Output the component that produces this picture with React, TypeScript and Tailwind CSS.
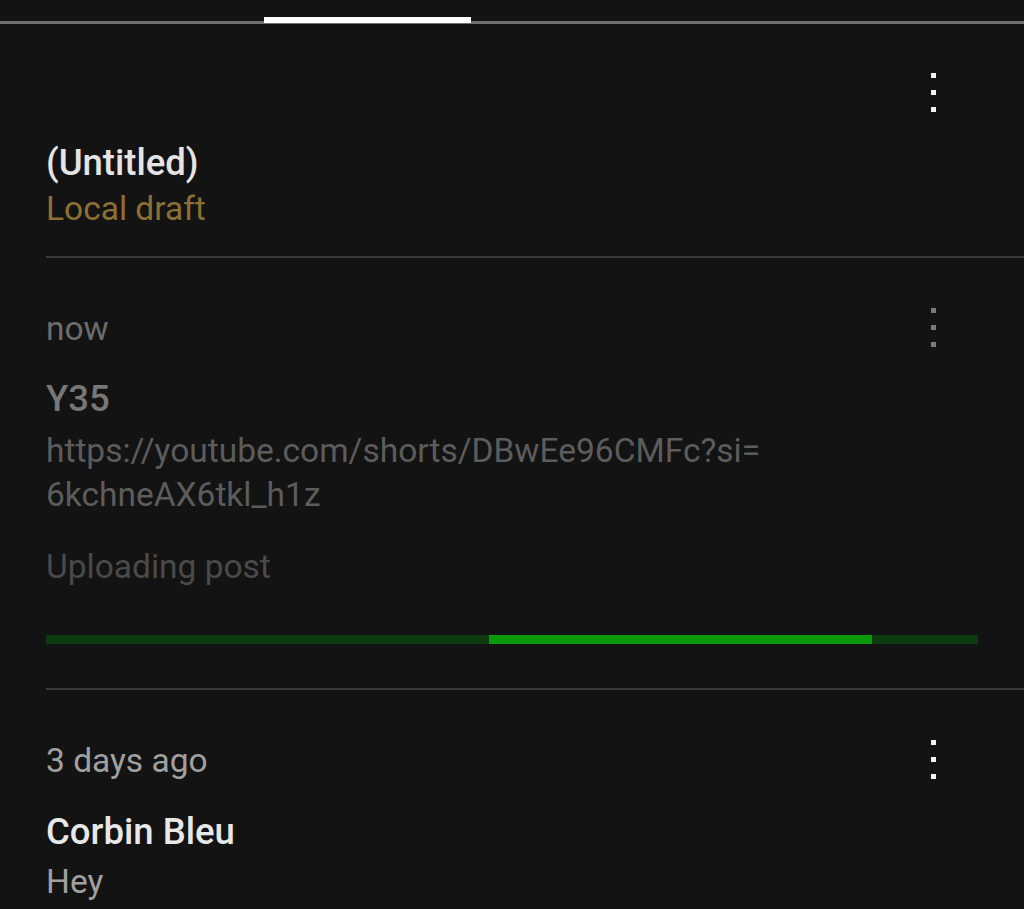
const font = { fontFamily: "Roboto, 'Noto Sans', sans-serif" };

// three square dots, like the android overflow menu
const Dots: React.FC<{ dim?: boolean }> = ({ dim }) => {
  const dot = dim ? "w-[5px] h-[5px] bg-[#7a7a7a]" : "w-[5px] h-[5px] bg-[#f2f2f2]";
  return (
    <button className="flex flex-col gap-[12px] mt-[1px] mr-[88px]" aria-label="More">
      <span className={dot} />
      <span className={dot} />
      <span className={dot} />
    </button>
  );
};

const Divider = () => <div className="ml-[46px] h-[2px] bg-[#383838]" />;

export default function App() {
  return (
    <div className="w-[1024px] h-[909px] overflow-hidden bg-[#131313]" style={font}>
      {/* Tabs */}
      <div className="relative h-[24px] border-b-[3px] border-[#6e6e6e]">
        <div className="absolute left-[264px] top-[17px] w-[207px] h-[6px] bg-white" />
      </div>

      {/* Local draft */}
      <section className="pl-[46px]">
        <div className="flex justify-end pt-[48px]">
          <Dots />
        </div>
        <h2 className="mt-[29px] text-[36.5px] leading-[44px] font-medium text-[#e4e4e4]">(Untitled)</h2>
        <p className="mt-[2px] text-[33.5px] leading-[44px] text-[#8c7033]">Local draft</p>
      </section>
      <div className="mt-[25px]">
        <Divider />
      </div>

      {/* Uploading */}
      <section className="pl-[46px] pt-[49px]">
        <div className="flex justify-between items-start">
          <span className="text-[33.5px] leading-[44px] text-[#6c6c6c]">now</span>
          <Dots dim />
        </div>
        <h2 className="mt-[26px] text-[36.5px] leading-[44px] font-medium text-[#777777]">Y35</h2>
        <p className="mt-[8px] text-[33.5px] leading-[44px] text-[#5c5c5c]">
          https://youtube.com/shorts/DBwEe96CMFc?si=
          <br />
          6kchneAX6tkl_h1z
        </p>
        <p className="mt-[28px] text-[33.5px] leading-[44px] text-[#4a4a4a]">Uploading post</p>
        <div className="mt-[46px] mr-[46px] h-[9px] bg-[#0e3a10]">
          <div className="ml-[443px] w-[383px] h-full bg-[#0a9b0c]" />
        </div>
      </section>
      <div className="mt-[44px]">
        <Divider />
      </div>

      {/* Published */}
      <section className="pl-[46px] pt-[49px]">
        <div className="flex justify-between items-start">
          <span className="text-[33.5px] leading-[44px] text-[#a0a0a0]">3 days ago</span>
          <Dots />
        </div>
        <h2 className="mt-[27px] text-[36.5px] leading-[44px] font-medium text-[#e8e8e8]">Corbin Bleu</h2>
        <p className="mt-[6px] text-[33.5px] leading-[44px] text-[#a0a0a0]">Hey</p>
      </section>
    </div>
  );
}
